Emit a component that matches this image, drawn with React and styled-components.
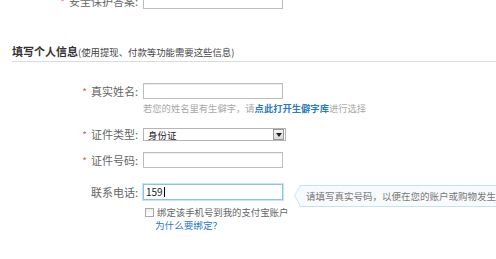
import React from 'react'
import styled, { createGlobalStyle } from 'styled-components'

const GlobalStyle = createGlobalStyle`
    html, body {
        margin: 0;
        padding: 0;
        background: #fff;
        overflow: hidden;
    }
    body {
        font-family: "Noto Sans CJK SC", "Liberation Sans", sans-serif;
        color: #666;
    }
`

const App = () => {
    return (
        <Page>
            <GlobalStyle />
            <Row top={-7}>
                <Label required>安全保护答案:</Label>
                <Field>
                    <Input />
                </Field>
            </Row>

            <Heading>
                填写个人信息<small>(使用提现、付款等功能需要这些信息)</small>
            </Heading>

            <Form>
                <Row>
                    <Label required>真实姓名:</Label>
                    <Field>
                        <Input />
                        <Hint>
                            若您的姓名里有生僻字，请<Link bold>点此打开生僻字库</Link>进行选择
                        </Hint>
                    </Field>
                </Row>

                <Row top={11}>
                    <Label required>证件类型:</Label>
                    <Field>
                        <Select>
                            <span>身份证</span>
                            <Arrow>
                                <svg width="6" height="4" viewBox="0 0 6 4">
                                    <path d="M0 0h6L3 4z" fill="#222" />
                                </svg>
                            </Arrow>
                        </Select>
                    </Field>
                </Row>

                <Row top={9}>
                    <Label required>证件号码:</Label>
                    <Field>
                        <Input />
                    </Field>
                </Row>

                <Row top={15}>
                    <Label>联系电话:</Label>
                    <Field>
                        <PhoneLine>
                            <Input focused>
                                159<Caret />
                            </Input>
                            <Tip>请填写真实号码，以便在您的账户或购物发生问题时与您联系</Tip>
                        </PhoneLine>
                        <Check>
                            <Box />
                            绑定该手机号到我的支付宝账户
                        </Check>
                        <Link why>为什么要绑定？</Link>
                    </Field>
                </Row>
            </Form>
        </Page>
    )
}

// styled component
const Page = styled.div`
    width: 496px;
    height: 259px;
    overflow: hidden;
    padding-left: 12px;
    box-sizing: border-box;
`

const Form = styled.div`
    display: flex;
    flex-direction: column;
    padding-top: 21px;
`

const Row = styled.div`
    display: grid;
    grid-template-columns: 126px 1fr;
    column-gap: 5px;
    align-items: start;
    margin-top: ${p => (p.top ? `${p.top}px` : 0)};
`

const Label = styled.div`
    font-size: 11px;
    line-height: 16px;
    color: #666;
    text-align: right;
    white-space: nowrap;
    &::before {
        content: ${p => (p.required ? "'*'" : "''")};
        color: #e5555e;
        font-size: 10px;
        margin-right: 4px;
    }
`

const Field = styled.div`
    display: flex;
    flex-direction: column;
    align-items: flex-start;
`

const Input = styled.div`
    width: 136px;
    height: 14px;
    border: 1px solid ${p => (p.focused ? '#86c6e2' : '#bdbdbd')};
    box-shadow: ${p => (p.focused ? '0 0 0 1px #c7e6f3' : 'inset 0 1px 1px #eee')};
    background: #fff;
    font-size: 10px;
    line-height: 14px;
    color: #222;
    padding-left: 2px;
    box-sizing: content-box;
    display: flex;
    align-items: center;
    flex-shrink: 0;
`

const Caret = styled.span`
    display: inline-block;
    width: 1px;
    height: 10px;
    background: #000;
    margin-left: 1px;
`

const Hint = styled.div`
    font-size: 9.3px;
    line-height: 14px;
    color: #a8a8a8;
    margin-top: 2px;
    white-space: nowrap;
`

const Link = styled.span`
    color: #2a7bbf;
    font-weight: ${p => (p.bold ? 'bold' : 'normal')};
    font-size: ${p => (p.why ? '9.6px' : 'inherit')};
    line-height: ${p => (p.why ? '13px' : 'inherit')};
    margin-left: ${p => (p.why ? '12px' : 0)};
`

const Select = styled.div`
    width: 136px;
    height: 11px;
    border: 1px solid #b5b5b5;
    background: #fff;
    display: flex;
    justify-content: space-between;
    align-items: center;
    font-size: 9.5px;
    color: #222;
    padding: 0 1px 0 4px;
    box-sizing: content-box;
    margin-top: 2px;
`

const Arrow = styled.span`
    width: 9px;
    height: 9px;
    border: 1px solid #999;
    background: linear-gradient(#f4f4f4, #d8d8d8);
    display: flex;
    align-items: center;
    justify-content: center;
`

const PhoneLine = styled.div`
    display: flex;
    align-items: flex-start;
    gap: 16px;
    height: 16px;
    white-space: nowrap;
`

const Tip = styled.div`
    position: relative;
    height: 20px;
    margin-top: 1px;
    border: 1px solid #c6e2ef;
    border-radius: 2px;
    background: #f7fbfd;
    font-size: 9.5px;
    line-height: 20px;
    color: #777;
    padding-left: 6px;
    &::before {
        content: '';
        position: absolute;
        left: -7px;
        top: 3px;
        width: 12px;
        height: 12px;
        background: #f7fbfd;
        border-left: 1px solid #c6e2ef;
        border-bottom: 1px solid #c6e2ef;
        transform: scaleX(0.6) rotate(45deg);
    }
`

const Check = styled.div`
    display: flex;
    align-items: center;
    gap: 3px;
    font-size: 9.4px;
    line-height: 13px;
    color: #666;
    margin-top: 6px;
    margin-left: 2px;
`

const Box = styled.span`
    width: 7px;
    height: 7px;
    border: 1px solid #aaa;
    background: linear-gradient(#eee, #fff);
`

const Heading = styled.div`
    margin-top: 34px;
    font-size: 11px;
    font-weight: bold;
    color: #333;
    line-height: 14px;
    padding-bottom: 2px;
    border-bottom: 1px solid #dcdcdc;
    small {
        font-size: 9.4px;
        font-weight: normal;
        color: #444;
    }
`

export default App
